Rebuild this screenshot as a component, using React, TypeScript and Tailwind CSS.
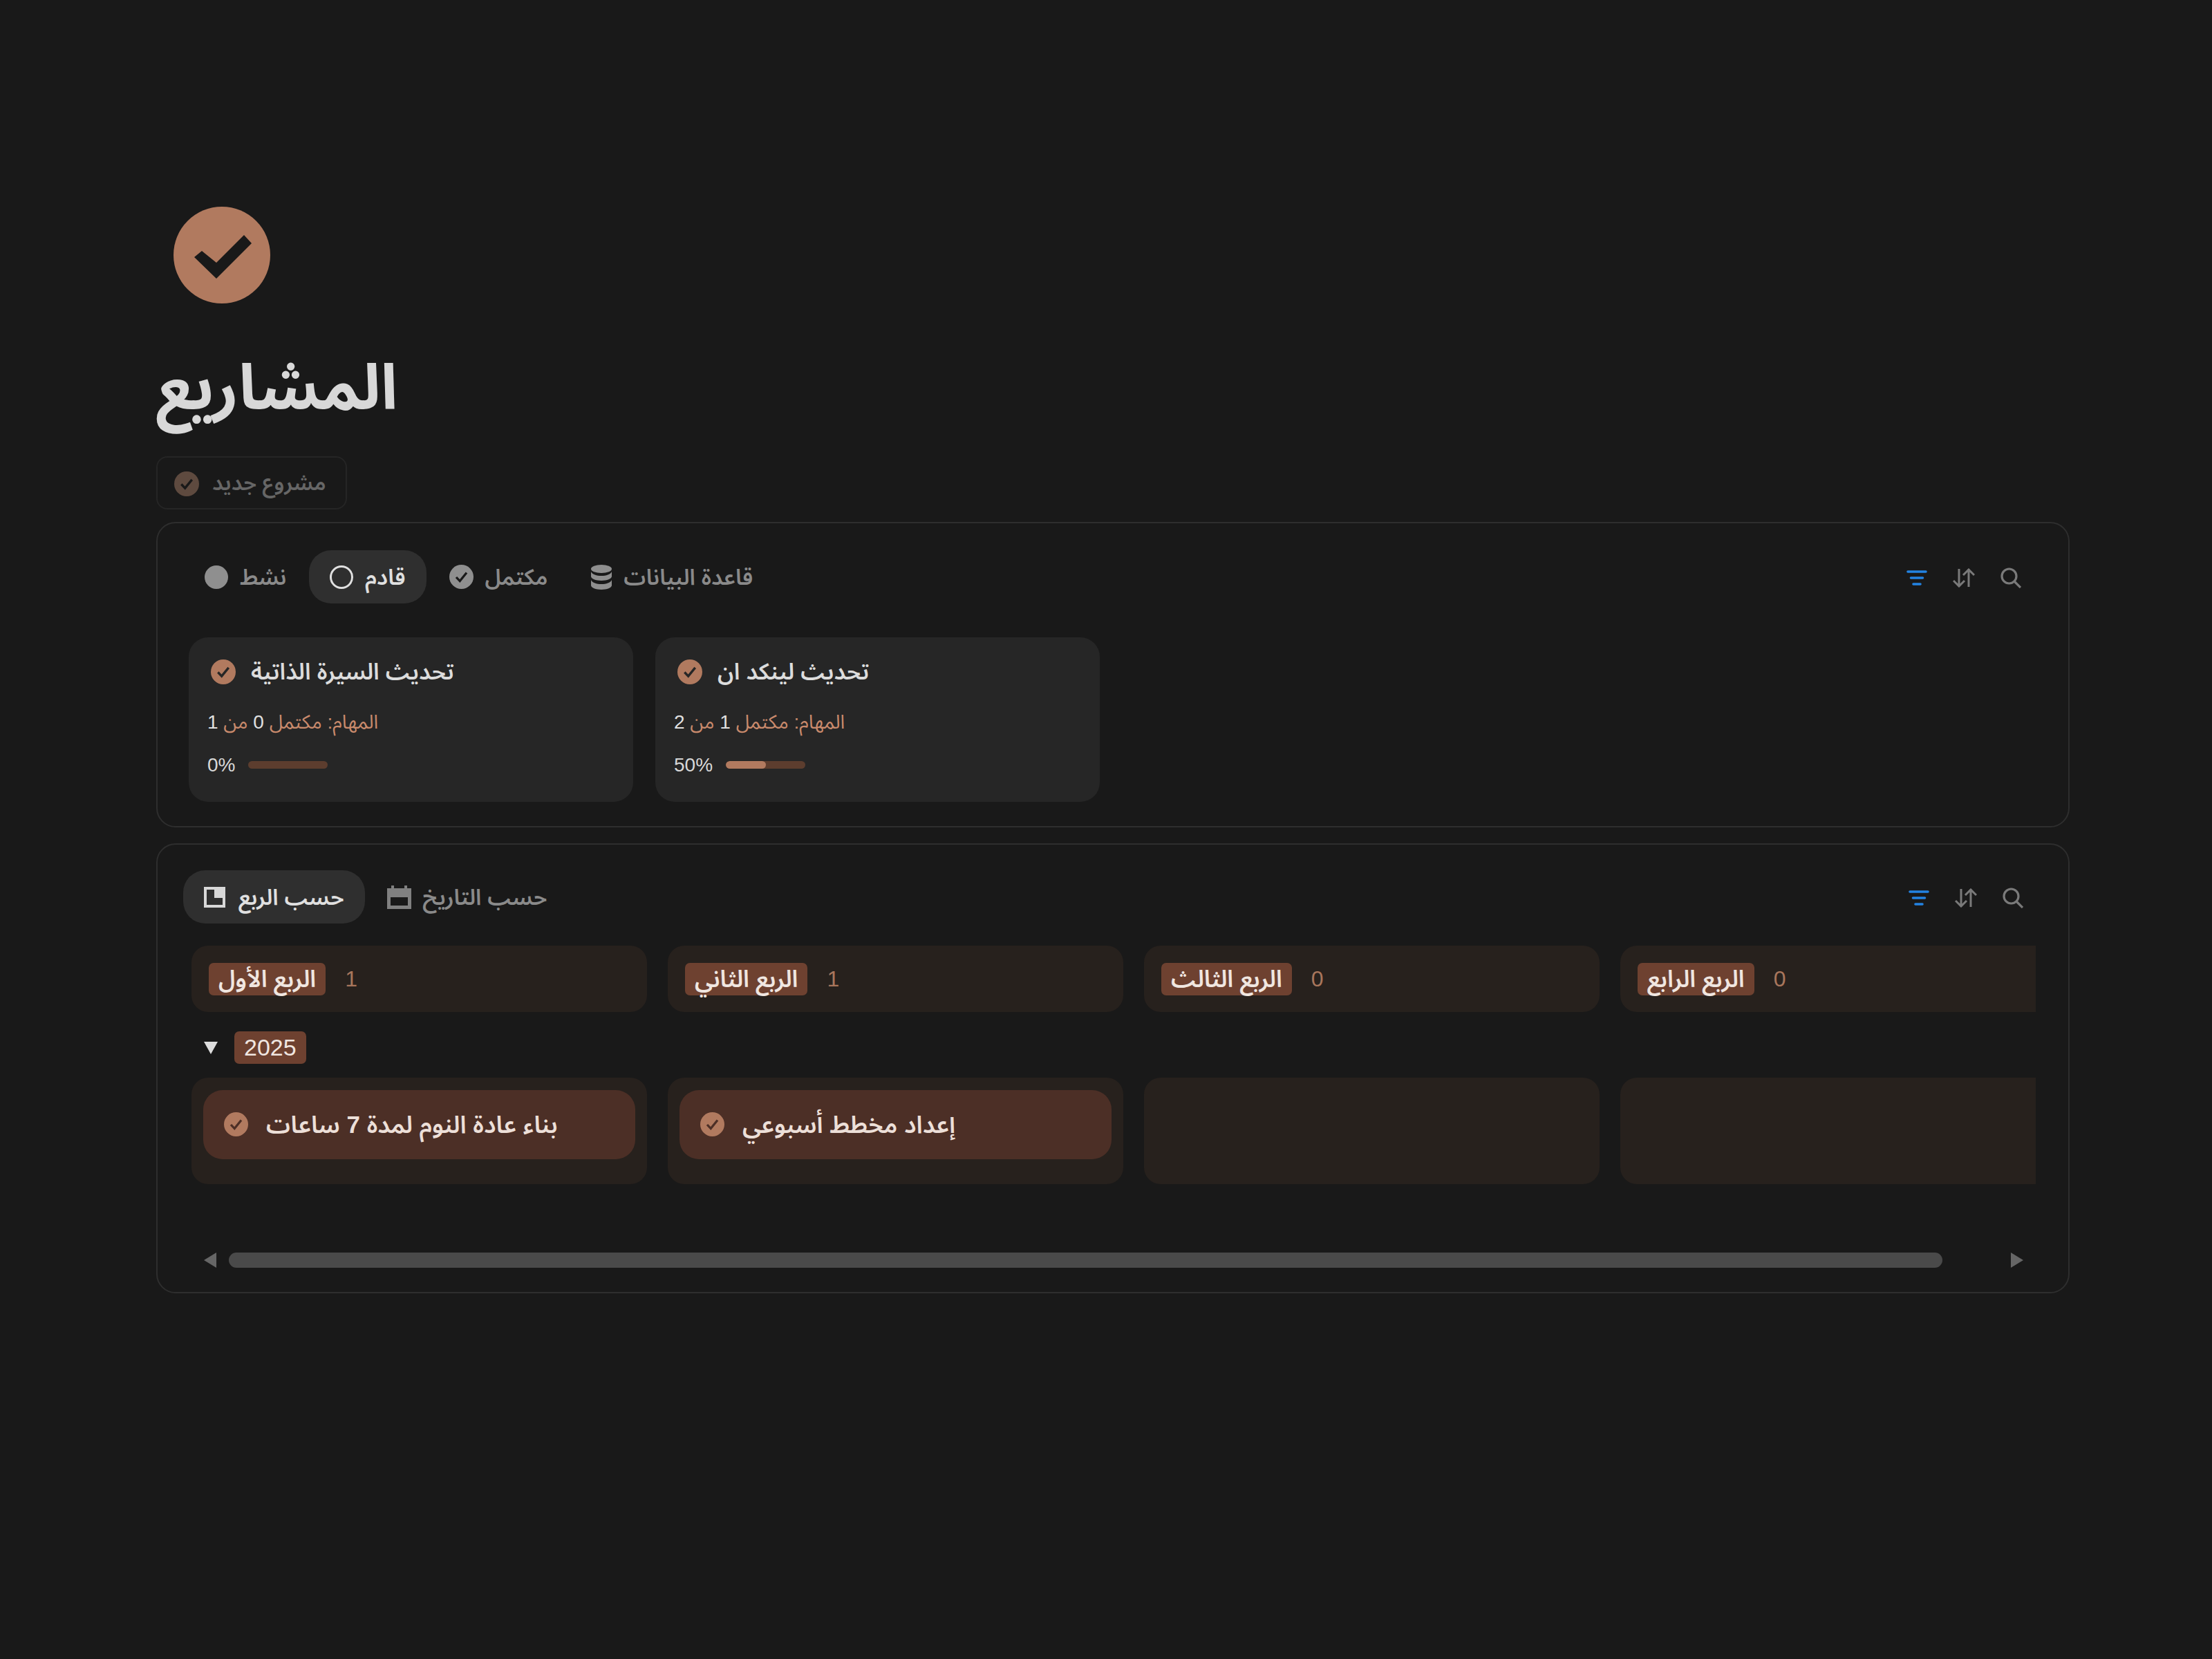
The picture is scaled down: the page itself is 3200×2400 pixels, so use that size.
const FONT = "font-['Liberation_Sans','Noto_Sans_Arabic','Noto_Sans',sans-serif]";

function CheckCircle({ className, circle, check, thin }: { className: string; circle: string; check: string; thin?: boolean }) {
  return (
    <svg viewBox="0 0 140 140" className={className}>
      <circle cx="70" cy="70" r="70" fill={circle} />
      {thin ? (
        <polyline points="40,72 61,94 100,46" fill="none" stroke={check} strokeWidth="13" />
      ) : (
        <polygon points="30,73 41,64 62,81 102,41 113,53 62,104" fill={check} />
      )}
    </svg>
  );
}

function Filter() {
  return (
    <svg viewBox="0 0 30 22" className="w-[30px] h-[22px]" fill="none" stroke="#2383e2" strokeWidth="3.6" strokeLinecap="round">
      <path d="M2 2h26M6.5 11h17M10 20h10" />
    </svg>
  );
}

function Sort() {
  return (
    <svg viewBox="0 0 32 28" className="w-[32px] h-[28px]" fill="none" stroke="#7a7a7a" strokeWidth="3">
      <path d="M9 1v26M1 18l8 8 8-8M23 27V1M15 10l8-8 8 8" />
    </svg>
  );
}

function Search() {
  return (
    <svg viewBox="0 0 30 30" className="w-[30px] h-[30px]" fill="none" stroke="#7a7a7a" strokeWidth="3.2">
      <circle cx="12.5" cy="12.5" r="10.5" />
      <path d="M20 20l9 9" />
    </svg>
  );
}

function Tools({ className }: { className: string }) {
  return (
    <div className={`flex items-center gap-[37px] mt-[2px] ${className}`}>
      <Filter />
      <Sort />
      <Search />
    </div>
  );
}

function Tab({ label, icon, active }: { label: string; icon: React.ReactNode; active?: boolean }) {
  return (
    <div
      className={`flex items-center h-[77px] px-[30px] gap-[17px] rounded-[32px] text-[32px] font-semibold whitespace-nowrap ${
        active ? 'bg-[#2f2f2f] text-[#e0e0e0]' : 'text-[#8a8a8a]'
      }`}
    >
      {icon}
      <span>{label}</span>
    </div>
  );
}

function Project({ title, done, total, pct }: { title: string; done: number; total: number; pct: number }) {
  return (
    <div className="w-[643px] h-[238px] rounded-[28px] bg-[#262626] pt-[31px] pl-[27px] flex flex-col">
      <div className="flex items-center gap-[22px] pl-[5px] h-[38px]">
        <CheckCircle thin className="w-[36px] h-[36px]" circle="#b17a5f" check="#262626" />
        <span className="text-[33px] font-semibold text-[#dcdcdc] whitespace-nowrap">{title}</span>
      </div>
      <div className="mt-[34px] h-[40px] flex items-center text-[28px] text-[#c98a6c] whitespace-nowrap">
        <span>
          المهام: مكتمل <span className="text-[#e0e0e0]">{done}</span> من <span className="text-[#e0e0e0]">{total}</span>
        </span>
      </div>
      <div className="mt-[24px] flex items-center gap-[19px] h-[36px]">
        <span className="text-[28px] text-[#d8d8d8]">{pct}%</span>
        <div className="w-[115px] h-[11px] -mt-[2px] rounded-full bg-[#5c3d2e] overflow-hidden">
          <div className="h-full rounded-full bg-[#b17a5f]" style={{ width: `${pct}%` }} />
        </div>
      </div>
    </div>
  );
}

function Header({ label, count }: { label: string; count: number }) {
  return (
    <div className="w-[659px] h-[96px] shrink-0 rounded-[24px] bg-[#27211d] flex items-center pl-[25px] gap-[28px]">
      <span className="h-[47px] px-[14px] flex items-center rounded-[7px] bg-[#6e4130] text-[#f0e6e0] text-[34px] font-semibold whitespace-nowrap">
        {label}
      </span>
      <span className="text-[32px] text-[#a8765c]">{count}</span>
    </div>
  );
}

function Cell({ title }: { title?: string }) {
  return (
    <div className="w-[659px] h-[154px] shrink-0 rounded-[24px] bg-[#27211d] pt-[18px] pl-[17px]">
      {title && (
        <div className="w-[625px] h-[100px] rounded-[28px] bg-[#4c2f26] flex items-center pl-[30px] gap-[26px]">
          <CheckCircle thin className="w-[35px] h-[35px] -mt-[2px]" circle="#b17a5f" check="#4c2f26" />
          <span className="text-[35px] font-semibold text-[#ecdfd8] whitespace-nowrap">{title}</span>
        </div>
      )}
    </div>
  );
}

export default function App() {
  return (
    <div dir="ltr" className={`min-h-[2400px] bg-[#191919] pt-[299px] pl-[226px] ${FONT}`}>
      <div className="w-[2768px]">
        <CheckCircle className="ml-[25px] w-[140px] h-[140px]" circle="#b17a5f" check="#191919" />
        <h1 className="mt-[66px] h-[110px] flex items-center text-[91px] font-bold text-[#d8d8d8] leading-none whitespace-nowrap">
          المشاريع
        </h1>
        <div className="mt-[45px] w-[276px] h-[77px] rounded-[16px] border-2 border-[#252525] flex items-center pl-[24px] pt-[2px] gap-[19px]">
          <CheckCircle thin className="w-[36px] h-[36px]" circle="#5e4a3f" check="#191919" />
          <span className="text-[31px] font-semibold text-[#666666] whitespace-nowrap">مشروع جديد</span>
        </div>

        <section className="mt-[18px] h-[442px] rounded-[28px] border-2 border-[#2e2e2e] pt-[39px] pl-[38px]">
          <div className="flex items-center justify-between">
            <div className="flex items-center gap-[3px]">
              <Tab
                label="نشط"
                icon={<div className="w-[34px] h-[34px] rounded-full bg-[#8f8f8f]" />}
              />
              <Tab
                active
                label="قادم"
                icon={<div className="w-[34px] h-[34px] rounded-full border-[3px] border-[#e0e0e0]" />}
              />
              <Tab
                label="مكتمل"
                icon={<CheckCircle thin className="w-[35px] h-[35px]" circle="#8f8f8f" check="#191919" />}
              />
              <Tab
                label="قاعدة البيانات"
                icon={
                  <svg viewBox="0 0 30 36" className="w-[30px] h-[36px]" fill="#8f8f8f">
                    <ellipse cx="15" cy="6" rx="15" ry="6" />
                    <path d="M0 10c2 4 8 6 15 6s13-2 15-6v7c0 3-7 6-15 6S0 20 0 17z" />
                    <path d="M0 22c2 4 8 6 15 6s13-2 15-6v8c0 3-7 6-15 6S0 33 0 30z" />
                  </svg>
                }
              />
            </div>
            <Tools className="mr-[68px]" />
          </div>
          <div className="mt-[49px] ml-[7px] flex gap-[32px]">
            <Project title="تحديث السيرة الذاتية" done={0} total={1} pct={0} />
            <Project title="تحديث لينكد ان" done={1} total={2} pct={50} />
          </div>
        </section>

        <section className="mt-[23px] h-[651px] rounded-[28px] border-2 border-[#2e2e2e] pt-[37px] pl-[37px]">
          <div className="flex items-center justify-between">
            <div className="flex items-center gap-[2px]">
              <Tab
                active
                label="حسب الربع"
                icon={
                  <svg viewBox="0 0 31 30" className="w-[31px] h-[30px] mr-[2px]" fill="#d8d8d8">
                    <path fillRule="evenodd" d="M0 0h31v30H0zM4 4v22h23V16H15V4z" />
                  </svg>
                }
              />
              <Tab
                label="حسب التاريخ"
                icon={
                  <svg viewBox="0 0 35 34" className="w-[35px] h-[34px]" fill="#808080">
                    <path d="M6 0h4v4h15V0h4v4h6v30H0V4h6zM5 17v12h25V17z" fillRule="evenodd" />
                  </svg>
                }
              />
            </div>
            <Tools className="mr-[65px]" />
          </div>

          <div className="mt-[32px] ml-[12px] w-[2668px] overflow-hidden">
            <div className="flex gap-[30px]">
              <Header label="الربع الأول" count={1} />
              <Header label="الربع الثاني" count={1} />
              <Header label="الربع الثالث" count={0} />
              <Header label="الربع الرابع" count={0} />
            </div>
            <div className="mt-[28px] flex items-center gap-[24px] pl-[18px]">
              <svg viewBox="0 0 20 18" className="w-[20px] h-[18px]" fill="#dddddd">
                <path d="M0 0h20L10 18z" />
              </svg>
              <span className="h-[47px] px-[14px] flex items-center rounded-[7px] bg-[#6e4130] text-[#f0e6e0] text-[34px] font-medium">
                2025
              </span>
            </div>
            <div className="mt-[20px] flex gap-[30px]">
              <Cell title="بناء عادة النوم لمدة 7 ساعات" />
              <Cell title="إعداد مخطط أسبوعي" />
              <Cell />
              <Cell />
            </div>
          </div>

          <div className="mt-[99px] ml-[30px] w-[2632px] flex items-center justify-between">
            <svg viewBox="0 0 18 22" className="w-[18px] h-[22px]" fill="#666666">
              <path d="M18 0v22L0 11z" />
            </svg>
            <div className="w-[2479px] h-[22px] rounded-full bg-[#4a4a4a] mr-[98px] ml-[17px]" />
            <svg viewBox="0 0 18 22" className="w-[18px] h-[22px]" fill="#666666">
              <path d="M0 0v22l18-11z" />
            </svg>
          </div>
        </section>
      </div>
    </div>
  );
}
